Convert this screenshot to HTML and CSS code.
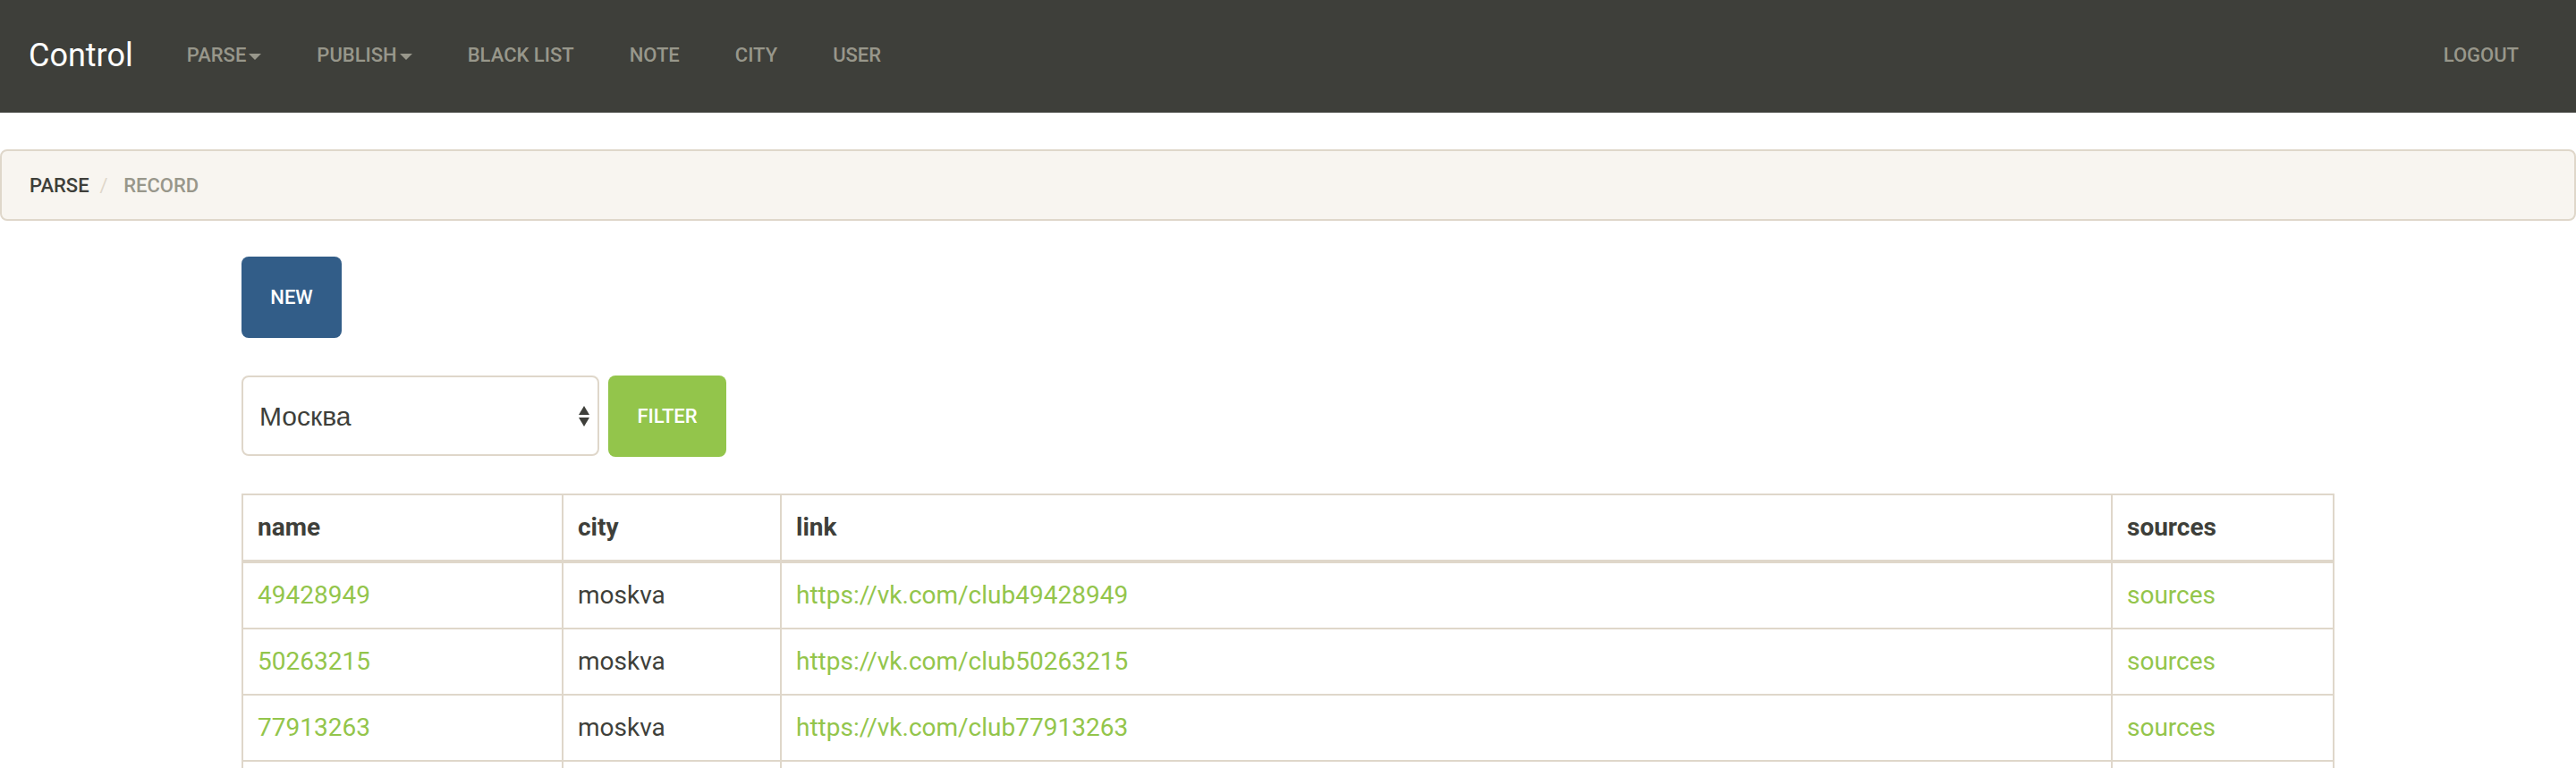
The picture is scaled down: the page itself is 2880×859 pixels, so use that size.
FILE: index.html
```html
<!DOCTYPE html>
<html lang="en">
<head>
<meta charset="utf-8">
<title>Control</title>
<link rel="stylesheet" href="styles.css">
</head>
<body>
<nav class="navbar">
  <a class="brand" href="#">Control</a>
  <ul class="nav">
    <li><a href="#">PARSE<span class="caret"></span></a></li>
    <li><a href="#">PUBLISH<span class="caret"></span></a></li>
    <li><a href="#">BLACK LIST</a></li>
    <li><a href="#">NOTE</a></li>
    <li><a href="#">CITY</a></li>
    <li><a href="#">USER</a></li>
  </ul>
  <ul class="nav nav-right">
    <li><a href="#">LOGOUT</a></li>
  </ul>
</nav>

<div class="breadcrumb">
  <a class="crumb" href="#">PARSE</a>
  <span class="sep">/&nbsp;</span>
  <span class="crumb crumb-current">RECORD</span>
</div>

<main class="container">
  <div class="actions">
    <button class="btn btn-primary btn-new">NEW</button>
  </div>
  <form class="filter-form">
    <div class="select-wrap">
      <select class="city-select">
        <option>Москва</option>
      </select>
    </div>
    <button type="button" class="btn btn-success btn-filter">FILTER</button>
  </form>

  <table class="records">
    <colgroup>
      <col class="col-name">
      <col class="col-city">
      <col class="col-link">
      <col class="col-sources">
    </colgroup>
    <thead>
      <tr><th>name</th><th>city</th><th>link</th><th>sources</th></tr>
    </thead>
    <tbody>
      <tr><td><a href="#">49428949</a></td><td>moskva</td><td><a href="#">https://vk.com/club49428949</a></td><td><a href="#">sources</a></td></tr>
      <tr><td><a href="#">50263215</a></td><td>moskva</td><td><a href="#">https://vk.com/club50263215</a></td><td><a href="#">sources</a></td></tr>
      <tr><td><a href="#">77913263</a></td><td>moskva</td><td><a href="#">https://vk.com/club77913263</a></td><td><a href="#">sources</a></td></tr>
      <tr><td>&nbsp;</td><td>&nbsp;</td><td>&nbsp;</td><td>&nbsp;</td></tr>
    </tbody>
  </table>
</main>
</body>
</html>
```

FILE: styles.css
```css
* { box-sizing: border-box; }

html, body {
  margin: 0;
  padding: 0;
  background: #ffffff;
  color: #3e3f3a;
  font-family: Roboto, "Liberation Sans", Arial, sans-serif;
  font-size: 28px;
}

a { text-decoration: none; }

/* ---------- navbar ---------- */
.navbar {
  display: flex;
  align-items: center;
  height: 126px;
  background: #3e3f3a;
  padding: 0 33px 2px 32px;
}

.brand {
  color: #ffffff;
  font-size: 36px;
  font-weight: 400;
  padding-right: 29px;
  line-height: 40px;
}

.nav {
  display: flex;
  list-style: none;
  margin: 0;
  padding: 0;
}

.nav li a {
  display: flex;
  align-items: center;
  padding: 0 31px;
  color: #98978b;
  font-size: 22px;
  font-weight: 500;
  line-height: 40px;
  text-transform: uppercase;
}

.nav-right { margin-left: auto; }

.caret {
  display: inline-block;
  width: 0;
  height: 0;
  margin-left: 3px;
  margin-top: 2px;
  border-top: 7px solid #98978b;
  border-left: 7px solid transparent;
  border-right: 7px solid transparent;
}

/* ---------- breadcrumb ---------- */
.breadcrumb {
  display: flex;
  align-items: center;
  height: 80px;
  margin-top: 41px;
  padding: 0 31px;
  background: #f8f5f0;
  border: 2px solid #dfd7ca;
  border-radius: 8px;
  font-size: 22px;
  font-weight: 500;
  text-transform: uppercase;
}

.crumb { color: #3e3f3a; }
.crumb-current { color: #98978b; }

.sep {
  color: #dfd7ca;
  padding: 0 12px;
  font-weight: 400;
}

/* ---------- content ---------- */
.container {
  width: 2340px;
  margin: 0 auto;
  padding-top: 40px;
}

.actions { display: flex; }

.btn {
  display: inline-flex;
  align-items: center;
  justify-content: center;
  border: none;
  border-radius: 8px;
  color: #ffffff;
  font-family: Roboto, "Liberation Sans", Arial, sans-serif;
  font-size: 22px;
  font-weight: 500;
  text-transform: uppercase;
  cursor: pointer;
}

.btn-primary { background: #325d88; }
.btn-success { background: #93c54b; }

.btn-new {
  width: 112px;
  height: 91px;
}

.filter-form {
  display: flex;
  gap: 10px;
  margin-top: 42px;
}

.select-wrap {
  position: relative;
  width: 400px;
  height: 90px;
}

.city-select {
  -webkit-appearance: none;
  appearance: none;
  width: 100%;
  height: 100%;
  padding: 0 40px 0 18px;
  border: 2px solid #dfd7ca;
  border-radius: 8px;
  background: #ffffff;
  color: #3e3f3a;
  font-family: "Liberation Sans", Arial, sans-serif;
  font-size: 30px;
  outline: none;
}

.select-wrap::before,
.select-wrap::after {
  content: "";
  position: absolute;
  right: 11px;
  width: 0;
  height: 0;
  border-left: 6px solid transparent;
  border-right: 6px solid transparent;
  pointer-events: none;
}

.select-wrap::before {
  top: 34px;
  border-bottom: 10px solid #3e3f3a;
}

.select-wrap::after {
  top: 47px;
  border-top: 10px solid #3e3f3a;
}

.btn-filter {
  width: 132px;
  height: 91px;
}

/* ---------- table ---------- */
.records {
  width: 2340px;
  margin-top: 41px;
  border-collapse: collapse;
  table-layout: fixed;
  border: 2px solid #dfd7ca;
}

.col-name { width: 358px; }
.col-city { width: 244px; }
.col-sources { width: 248px; }

.records th,
.records td {
  border: 2px solid #dfd7ca;
  padding: 16px;
  line-height: 40px;
  font-size: 28px;
  text-align: left;
  vertical-align: top;
  color: #3e3f3a;
}

.records th {
  font-weight: 700;
  border-bottom-width: 4px;
}

.records td a { color: #93c54b; }
```
